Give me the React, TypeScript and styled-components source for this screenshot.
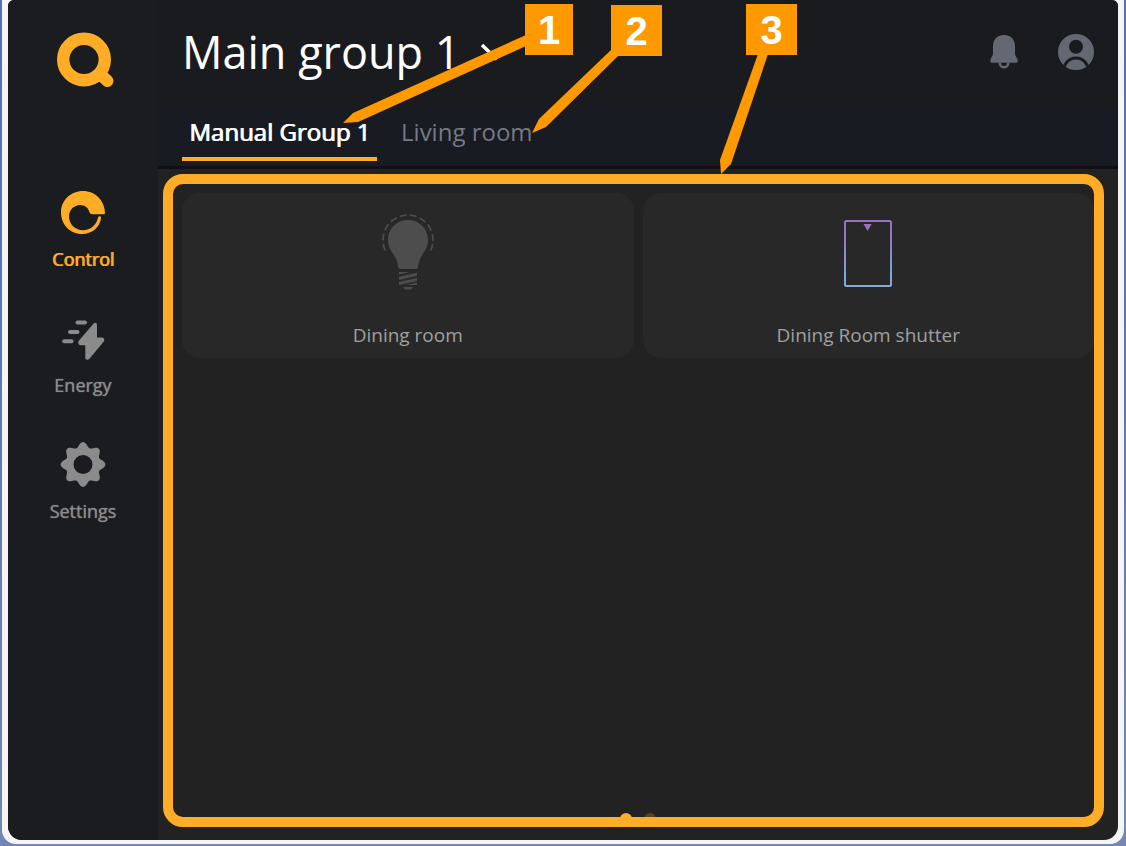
import React, { useState } from "react";
import styled, { createGlobalStyle } from "styled-components";

const amber = "#ffad26";
const callout = "#ff9900";

const GlobalStyle = createGlobalStyle`
  * { box-sizing: border-box; }
  body { margin: 0; font-family: "Open Sans", sans-serif; }
  button { font: inherit; color: inherit; border: 0; background: none; padding: 0; cursor: pointer; }
  svg { display: block; }
`;

const Desktop = styled.div`
  display: flex;
  min-height: 100vh;
  padding: 0 2px 2px;
  background: linear-gradient(#5272b4, #5b7bb4 50%, #7287b5);
`;

const Bezel = styled.div`
  position: relative;
  display: flex;
  flex: 1;
  padding: 0 6px 4px;
  background: #f5f5f6;
  border-radius: 0 0 14px 14px;
`;

const Screen = styled.div`
  display: flex;
  flex: 1;
  min-width: 0;
  overflow: hidden;
  background: #222222;
  border-radius: 6px 6px 14px 14px;
`;

const Sidebar = styled.nav`
  display: flex;
  flex-direction: column;
  align-items: center;
  flex: none;
  width: 150px;
  padding-top: 32px;
  background: #1b1c20;
`;

const Logo = styled.a`
  margin-bottom: 103px;
`;

const NavItem = styled.button<{ $active?: boolean }>`
  display: flex;
  flex-direction: column;
  align-items: center;
  gap: 12px;
  height: 126px;
  color: ${(p) => (p.$active ? amber : "#8b8b8b")};
  font-size: 18px;
  line-height: 26px;
  text-shadow: ${(p) => (p.$active ? "1px 0 currentColor" : "0 0 1px currentColor")};
`;

const NavIcon = styled.span`
  display: flex;
  align-items: center;
  height: 43px;
`;

const Main = styled.main`
  display: flex;
  flex-direction: column;
  flex: 1;
  min-width: 0;
`;

const Header = styled.header`
  display: flex;
  align-items: center;
  height: 107px;
  padding: 0 24px 4px 24px;
  background: #1a1b1f;
`;

const Title = styled.h1`
  margin: 0;
  flex: 1;
  font-size: 45px;
  font-weight: 400;
  line-height: 60px;
`;

const GroupButton = styled.button`
  display: flex;
  align-items: center;
  gap: 18px;
  color: #ffffff;
`;

const Actions = styled.div`
  display: flex;
  align-items: center;
  gap: 40px;
  color: #646873;
`;

const Tabs = styled.div`
  display: flex;
  align-items: flex-start;
  gap: 17px;
  height: 62px;
  padding: 0 24px;
  background: #181b22;
  border-bottom: 3px solid #101014;
`;

const Tab = styled.button<{ $active?: boolean }>`
  height: 54px;
  padding: 0 7px;
  border-bottom: 4px solid ${(p) => (p.$active ? amber : "transparent")};
  color: ${(p) => (p.$active ? "#ffffff" : "#757983")};
  font-size: 24px;
  line-height: 50px;
  text-shadow: ${(p) => (p.$active ? "1px 0 currentColor" : "none")};
`;

const Panel = styled.section`
  display: flex;
  flex-direction: column;
  flex: 1;
  margin: 5px 14px 13px 5px;
  padding: 9px 0 0 9px;
  border: 10px solid ${amber};
  border-radius: 20px;
  overflow: hidden;
`;

const Cards = styled.div`
  display: grid;
  grid-template-columns: 1fr 1fr;
  gap: 9px;
  flex: 1;
  align-content: start;
`;

const Card = styled.button`
  display: flex;
  flex-direction: column;
  align-items: center;
  justify-content: space-between;
  height: 165px;
  padding: 20px 0 10px;
  border-radius: 18px;
  background: #282828;
  color: #a0a0a0;
  font-size: 19px;
  line-height: 26px;
`;

const Pager = styled.div`
  display: flex;
  justify-content: center;
  align-items: flex-start;
  gap: 12px;
  height: 4px;
`;

const Dot = styled.button<{ $active?: boolean }>`
  width: 12px;
  height: 12px;
  border-radius: 50%;
  background: ${(p) => (p.$active ? amber : "#58431f")};
`;

const Arrows = styled.svg`
  position: absolute;
  top: 0;
  left: 0;
  fill: ${callout};
  pointer-events: none;
`;

const Badge = styled.span<{ $x: number; $y: number; $w: number }>`
  position: absolute;
  left: ${(p) => p.$x}px;
  top: ${(p) => p.$y}px;
  width: ${(p) => p.$w}px;
  height: 51px;
  background: ${callout};
  color: #ffffff;
  font: 700 40px/53px "Liberation Sans", sans-serif;
  text-align: center;
`;

const QLogo = () => (
  <svg width="54" height="56" viewBox="0 0 54 56" overflow="visible" fill="none" stroke={amber}>
    <circle cx="28" cy="27.5" r="20.8" strokeWidth="12.4" />
    <path d="M45 43L51.5 49" strokeWidth="12" strokeLinecap="round" />
  </svg>
);

const ControlIcon = () => (
  <svg width="44" height="43" viewBox="0 0 44 43" fill="currentColor">
    <path d="M44 22C43.6 9 34 0 22 0C9.5 0 0 9.5 0 21.5C0 33.5 9 43 21 43C31 43 38.500 36.500 40 27.500C40.500 25 37.800 24.600 37 26.800C35.500 34 29.500 39.200 22 39.200C14 39.200 8 33 8 25.500C8 19 13 14 19 14C24 14 27 17 28 20Q29 23.300 31 23.300L42.500 23.300Q44 23.300 44 22Z" />
  </svg>
);

const EnergyIcon = () => (
  <svg width="44" height="43" viewBox="0 1 44 43" overflow="visible" fill="currentColor">
    <path
      d="M16.500 6.500H24M9 16H16.500M3.200 25.300H10.600"
      stroke="currentColor"
      strokeWidth="4"
      strokeLinecap="round"
    />
    <path d="M32 8.200Q33.500 6.200 35.500 7.200Q36 7.600 36 9V21.500H41Q44.400 22 42.800 25.500L28 43.300Q25.500 44.500 24.300 42.500V29.200H19.500Q16.300 28.500 17.600 25Z" />
  </svg>
);

// Eight soft lobes traced as a closed wave around the hub.
const gearOutline = Array.from({ length: 160 }, (_, i) => {
  const a = (i / 160) * Math.PI * 2;
  const r = 19.9 + 2.5 * Math.cos(8 * a);
  return `${(23 + r * Math.cos(a)).toFixed(2)} ${(22.5 + r * Math.sin(a)).toFixed(2)}`;
}).join("L");

const GearIcon = () => (
  <svg width="46" height="45" viewBox="0 0 46 45" fill="currentColor">
    <path
      fillRule="evenodd"
      d={`M${gearOutline}ZM32.500 22.500a9.500 9.500 0 1 0-19 0a9.500 9.500 0 1 0 19 0Z`}
    />
  </svg>
);

const Chevron = () => (
  <svg width="32" height="20" viewBox="0 0 32 20" fill="none" stroke="currentColor" strokeWidth="3.500">
    <path d="M3 3L16.500 16L30 3" />
  </svg>
);

const BellIcon = () => (
  <svg width="28" height="34" viewBox="0 0 28 34" fill="currentColor">
    <path d="M3 11C3 4.500 7.500 0 14 0C20.500 0 25 4.500 25 11V18.500C25 21.500 27.800 23 27.800 26Q27.800 27.800 26 27.800H2Q.2 27.800 .2 26C.2 23 3 21.500 3 18.500Z" />
    <path d="M9.700 27.500a4.300 4.800 0 0 0 8.600 0" fill="none" stroke="currentColor" strokeWidth="2.600" />
  </svg>
);

const AvatarIcon = () => (
  <svg width="36" height="36" viewBox="0 0 36 36">
    <defs>
      <clipPath id="avatar-clip">
        <circle cx="18" cy="18" r="18" />
      </clipPath>
    </defs>
    <g clipPath="url(#avatar-clip)" fill="#646873">
      <rect width="36" height="36" />
      <circle cx="18" cy="12.7" r="7" fill="#1a1b1f" />
      <circle cx="18" cy="36" r="13.600" fill="#1a1b1f" />
      <circle cx="18" cy="36" r="10.600" />
    </g>
  </svg>
);

const BulbIcon = () => (
  <svg width="52" height="78" viewBox="0 0 52 78" fill="#4d4d4d">
    <path
      d="M3.300 37.500A25 25 0 1 1 48.700 37.500"
      fill="none"
      stroke="#4d4d4d"
      strokeWidth="1.700"
      strokeDasharray="7 3.360"
    />
    <path d="M26 7C37 7 46 15.500 46 27C46 33 43.500 37 40.500 41.500C37.500 46 36.500 50 36 54Q36 56 34 56H18Q16.500 56 16.200 54C15.500 49 14.500 46 11.500 41.500C8.500 37 6 33 6 27C6 15.500 15 7 26 7Z" />
    <path d="M17 59H28L17 61.500ZM17 63.800L35 59.700V62.700L17 67ZM17 69L35 65V68L17 72ZM24 72L35 69.500V72ZM21 74H31Q29.500 76.500 28 76.500H24Q22.500 76.500 21 74Z" />
  </svg>
);

const ShutterIcon = () => (
  <svg width="48" height="78" viewBox="0 0 48 78">
    <defs>
      <linearGradient id="shutter-edge" x1="0" y1="0" x2="0" y2="1">
        <stop offset="0" stopColor="#9672bf" />
        <stop offset=".2" stopColor="#9672bf" />
        <stop offset=".8" stopColor="#79a6d8" />
        <stop offset="1" stopColor="#84addb" />
      </linearGradient>
    </defs>
    <rect x="1" y="8" width="46" height="65" rx="1.500" fill="none" stroke="url(#shutter-edge)" strokeWidth="2" />
    <path d="M19.500 11H27.700L23.600 18Z" fill="#9672bf" />
  </svg>
);

const navItems = [
  { label: "Control", Icon: ControlIcon },
  { label: "Energy", Icon: EnergyIcon },
  { label: "Settings", Icon: GearIcon },
];

const groups = ["Manual Group 1", "Living room"];

export default function App() {
  const [section, setSection] = useState("Control");
  const [group, setGroup] = useState(groups[0]);
  const [page, setPage] = useState(0);

  return (
    <>
      <GlobalStyle />
      <Desktop>
        <Bezel>
          <Screen>
            <Sidebar>
              <Logo href="#" aria-label="Home">
                <QLogo />
              </Logo>
              {navItems.map(({ label, Icon }) => (
                <NavItem key={label} $active={section === label} onClick={() => setSection(label)}>
                  <NavIcon>
                    <Icon />
                  </NavIcon>
                  {label}
                </NavItem>
              ))}
            </Sidebar>
            <Main>
              <Header>
                <Title>
                  <GroupButton>
                    Main group 1
                    <Chevron />
                  </GroupButton>
                </Title>
                <Actions>
                  <button aria-label="Notifications">
                    <BellIcon />
                  </button>
                  <button aria-label="Account">
                    <AvatarIcon />
                  </button>
                </Actions>
              </Header>
              <Tabs role="tablist">
                {groups.map((name) => (
                  <Tab
                    key={name}
                    role="tab"
                    aria-selected={group === name}
                    $active={group === name}
                    onClick={() => setGroup(name)}
                  >
                    {name}
                  </Tab>
                ))}
              </Tabs>
              <Panel>
                <Cards>
                  <Card>
                    <BulbIcon />
                    Dining room
                  </Card>
                  <Card>
                    <ShutterIcon />
                    Dining Room shutter
                  </Card>
                </Cards>
                <Pager>
                  {[0, 1].map((n) => (
                    <Dot key={n} aria-label={`Page ${n + 1}`} $active={page === n} onClick={() => setPage(n)} />
                  ))}
                </Pager>
              </Panel>
            </Main>
          </Screen>
          <Arrows width="800" height="180" viewBox="2 0 800 180">
            <path d="M526 35V46L358 122L343 123L353 113Z" />
            <path d="M612 49L618 56L546 127L532 133L539 119Z" />
            <path d="M758 54H768L731 164L721 174L720 160Z" />
          </Arrows>
          <Badge $x={523} $y={4} $w={48}>1</Badge>
          <Badge $x={609} $y={5} $w={51}>2</Badge>
          <Badge $x={744} $y={4} $w={51}>3</Badge>
        </Bezel>
      </Desktop>
    </>
  );
}
